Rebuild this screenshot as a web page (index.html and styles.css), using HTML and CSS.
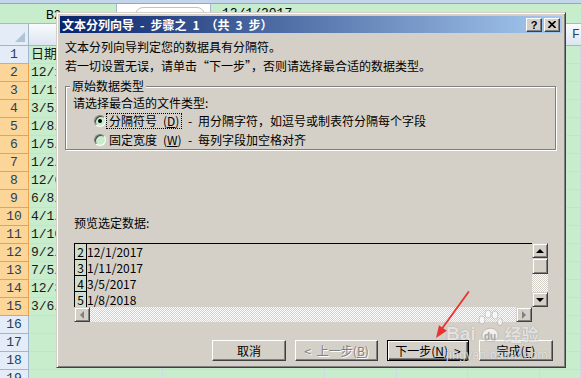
FILE: index.html
```html
<!DOCTYPE html>
<html>
<head>
  <meta charset="utf-8">
  <title>文本分列向导</title>
  <link rel="stylesheet" href="styles.css">
</head>
<body>
<div class="excel">
  <div class="topstrip"></div>
  <div class="formula">
    <div class="namebox">B2</div>
    <div class="fxbox"><span class="fx-oval"></span></div>
    <div class="fcontent">12/1/2017</div>
  </div>
  <div class="sheet">
    <div class="ch corner"><span class="corner-tri"></span></div><div class="ch">A</div><div class="ch">B</div><div class="ch">C</div><div class="ch">D</div><div class="ch">E</div><div class="ch last">F</div>
    <div class="rh">1</div><div class="c">日期</div><div class="c"></div><div class="c"></div><div class="c"></div><div class="c"></div><div class="c"></div>
    <div class="rh sel">2</div><div class="c">12/1/2017</div><div class="c"></div><div class="c"></div><div class="c"></div><div class="c"></div><div class="c"></div>
    <div class="rh sel">3</div><div class="c">1/11/2017</div><div class="c"></div><div class="c"></div><div class="c"></div><div class="c"></div><div class="c"></div>
    <div class="rh sel">4</div><div class="c">3/5/2017</div><div class="c"></div><div class="c"></div><div class="c"></div><div class="c"></div><div class="c"></div>
    <div class="rh sel">5</div><div class="c">1/8/2018</div><div class="c"></div><div class="c"></div><div class="c"></div><div class="c"></div><div class="c"></div>
    <div class="rh sel">6</div><div class="c">1/5/2018</div><div class="c"></div><div class="c"></div><div class="c"></div><div class="c"></div><div class="c"></div>
    <div class="rh sel">7</div><div class="c">1/2/2018</div><div class="c"></div><div class="c"></div><div class="c"></div><div class="c"></div><div class="c"></div>
    <div class="rh sel">8</div><div class="c">12/6/2017</div><div class="c"></div><div class="c"></div><div class="c"></div><div class="c"></div><div class="c"></div>
    <div class="rh sel">9</div><div class="c">6/8/2017</div><div class="c"></div><div class="c"></div><div class="c"></div><div class="c"></div><div class="c"></div>
    <div class="rh sel">10</div><div class="c">4/1/2017</div><div class="c"></div><div class="c"></div><div class="c"></div><div class="c"></div><div class="c"></div>
    <div class="rh sel">11</div><div class="c">1/10/2017</div><div class="c"></div><div class="c"></div><div class="c"></div><div class="c"></div><div class="c"></div>
    <div class="rh sel">12</div><div class="c">9/2/2017</div><div class="c"></div><div class="c"></div><div class="c"></div><div class="c"></div><div class="c"></div>
    <div class="rh sel">13</div><div class="c">7/5/2017</div><div class="c"></div><div class="c"></div><div class="c"></div><div class="c"></div><div class="c"></div>
    <div class="rh sel">14</div><div class="c">12/3/2017</div><div class="c"></div><div class="c"></div><div class="c"></div><div class="c"></div><div class="c"></div>
    <div class="rh sel">15</div><div class="c">3/6/2017</div><div class="c"></div><div class="c"></div><div class="c"></div><div class="c"></div><div class="c"></div>
    <div class="rh">16</div><div class="c"></div><div class="c"></div><div class="c"></div><div class="c"></div><div class="c"></div><div class="c"></div>
    <div class="rh">17</div><div class="c"></div><div class="c"></div><div class="c"></div><div class="c"></div><div class="c"></div><div class="c"></div>
    <div class="rh">18</div><div class="c"></div><div class="c"></div><div class="c"></div><div class="c"></div><div class="c"></div><div class="c"></div>
    <div class="rh">19</div><div class="c"></div><div class="c"></div><div class="c"></div><div class="c"></div><div class="c"></div><div class="c"></div>
  </div>
</div>

<!-- wizard window floats over the sheet -->
<div class="dialog">
  <div class="titlebar">
    <span class="title">文本分列向导&ensp;-&ensp;步骤之&ensp;1&ensp;（共&ensp;3&ensp;步）</span>
    <span class="tbtn help">?</span>
    <span class="tbtn close">
      <svg width="8" height="7" viewBox="0 0 8 7"><path d="M0.5 0 L7.5 7 M7.5 0 L0.5 7" stroke="#000" stroke-width="1.6"/></svg>
    </span>
  </div>
  <div class="dbody">
    <p class="intro">文本分列向导判定您的数据具有分隔符。</p>
    <p class="intro">若一切设置无误，请单击“下一步”，否则请选择最合适的数据类型。</p>
    <fieldset class="group">
      <legend>原始数据类型</legend>
      <div class="hint">请选择最合适的文件类型:</div>
      <div class="opt">
        <span class="radio on"></span>
        <span class="opt-label"><span class="focus">分隔符号&ensp;(<u>D</u>)</span></span>
        <span class="dash">-</span>用分隔字符，如逗号或制表符分隔每个字段
      </div>
      <div class="opt">
        <span class="radio"></span>
        <span class="opt-label"><span class="plain">固定宽度&ensp;(<u>W</u>)</span></span>
        <span class="dash">-</span>每列字段加空格对齐
      </div>
    </fieldset>
    <div class="pv-label">预览选定数据:</div>
    <div class="preview">
      <div class="pv-data">
        <div class="pv-row"><span class="pv-num">2</span><span class="pv-text">12/1/2017</span></div>
        <div class="pv-row"><span class="pv-num">3</span><span class="pv-text">1/11/2017</span></div>
        <div class="pv-row"><span class="pv-num">4</span><span class="pv-text">3/5/2017</span></div>
        <div class="pv-row"><span class="pv-num">5</span><span class="pv-text">1/8/2018</span></div>
      </div>
      <div class="vscroll">
        <div class="sb-btn"><span class="arr up"></span></div>
        <div class="sb-btn thumb"></div>
        <div class="sb-track"></div>
        <div class="sb-btn"><span class="arr down"></span></div>
      </div>
      <div class="hscroll">
        <div class="sb-btn"><span class="arr left"></span></div>
        <div class="sb-track"></div>
        <div class="sb-btn"><span class="arr right"></span></div>
      </div>
      <div class="sb-corner"></div>
    </div>
    <div class="buttons">
      <button class="btn cancel">取消</button>
      <button class="btn back" disabled>&lt;&ensp;上一步(<u>B</u>)</button>
      <button class="btn next">下一步(<u>N</u>)&ensp;&gt;</button>
      <button class="btn finish">完成(<u>F</u>)</button>
    </div>
  </div>
</div>

<!-- annotation arrow -->
<svg class="annot" width="581" height="378" viewBox="0 0 581 378">
  <path d="M468.5 292 L441 330" stroke="#e8332e" stroke-width="1.8" stroke-linecap="round"/>
  <path d="M436 338 L446.8 330.8 L439 325.2 Z" fill="#e8332e"/>
</svg>

<!-- watermark -->
<div class="wm">
  <div class="wm-top">
    <span class="wm-bai">Bai</span>
    <svg class="wm-paw" width="26" height="34" viewBox="0 0 26 34">
      <ellipse cx="5" cy="10" rx="3" ry="4" />
      <ellipse cx="11" cy="4" rx="3" ry="4" />
      <ellipse cx="18" cy="5" rx="3" ry="4" />
      <ellipse cx="23" cy="12" rx="2.5" ry="3.5" />
      <path d="M5 26 C5 17 20 15 21 25 C22 33 6 34 5 26 Z" />
      <text x="7" y="30" font-size="10" font-weight="bold" font-family="Liberation Sans, sans-serif">du</text>
    </svg>
    <span class="wm-jy">经验</span>
  </div>
  <div class="wm-url">jingyan.baidu.com</div>
</div>
</body>
</html>
```

FILE: styles.css
```css
* {
  box-sizing: border-box;
}
body {
  margin: 0;
  width: 581px;
  height: 378px;
  overflow: hidden;
  position: relative;
  background: #c7edcc;
  font-family: "Noto Sans CJK SC", sans-serif;
  font-size: 12px;
}

/* spreadsheet behind */
.topstrip {
  height: 4px;
  background: #c4d6ec;
  border-bottom: 1px solid #8fa8c8;
}
.formula {
  display: flex;
  height: 20px;
  border-bottom: 1px solid #a5b8d0;
}
.namebox {
  width: 117px;
  padding: 2px 0 0 46px;
  font: 12px/18px "Liberation Sans", sans-serif;
  border-right: 1px solid #a5b8d0;
}
.fxbox {
  width: 94px;
  background: #fff;
  border-right: 1px solid #a5b8d0;
  padding: 3px 0 0 18px;
}
.fx-oval {
  display: block;
  width: 70px;
  height: 16px;
  border: 1px solid #b7c4d4;
  border-radius: 8px;
}
.fcontent {
  padding-left: 11px;
  font: 13px/20px "Liberation Mono", monospace;
}
.sheet {
  display: grid;
  grid-template-columns: 29px 134px 162px 72px 71px 72px 41px;
  grid-template-rows: 22px;
  grid-auto-rows: 18px;
}
.ch {
  background: linear-gradient(#f9fbfd, #dce5f0);
  border-right: 1px solid #9eb6ce;
  border-bottom: 1px solid #9eb6ce;
  text-align: center;
  font: 13px/21px "Liberation Mono", monospace;
  color: #27415f;
}
.ch.last {
  text-align: left;
  padding-left: 32px;
  border-right: 0;
}
.corner {
  display: flex;
  align-items: flex-end;
  justify-content: flex-end;
  padding: 0 3px 3px 0;
  background: #e4ecf7;
}
.corner-tri {
  width: 0;
  height: 0;
  border-left: 10px solid transparent;
  border-bottom: 10px solid #b3c3d6;
}
.rh {
  background: #e4ecf7;
  border-right: 1px solid #9eb6ce;
  border-bottom: 1px solid #9eb6ce;
  text-align: center;
  font: 13px/18px "Liberation Mono", monospace;
  color: #27415f;
}
.rh.sel {
  background: #fcd598;
  border-color: #f0a048;
}
.c {
  border-right: 1px solid #d0d7e5;
  border-bottom: 1px solid #d0d7e5;
  padding-left: 2px;
  font: 13px/17px "Liberation Mono", "Noto Sans CJK SC", monospace;
  color: #1a1a1a;
  white-space: nowrap;
  overflow: hidden;
}

/* wizard dialog */
.dialog {
  position: absolute;
  left: 56px;
  top: 12px;
  width: 510px;
  height: 356px;
  background: #d4d0c8;
  border: 1px solid;
  border-color: #d4d0c8 #404040 #404040 #d4d0c8;
  box-shadow: inset 1px 1px #fff, inset -1px -1px #808080;
  padding: 3px;
}
.titlebar {
  height: 17px;
  display: flex;
  align-items: center;
  padding: 0 2px;
  background: linear-gradient(to right, #0a246a, #a6caf0);
  color: #fff;
  font-weight: bold;
}
.title {
  flex: 1;
  line-height: 17px;
}
.tbtn {
  width: 16px;
  height: 14px;
  margin-left: 2px;
  background: #d4d0c8;
  border: 1px solid;
  border-color: #fff #404040 #404040 #fff;
  box-shadow: inset -1px -1px #808080;
  display: flex;
  align-items: center;
  justify-content: center;
  color: #000;
  font: bold 11px/12px "Liberation Sans", sans-serif;
}
.dbody {
  padding: 4px 0 0 5px;
}
.intro {
  margin: 0;
  line-height: 19px;
}
.group {
  margin: 3px 0 0 0;
  width: 491px;
  padding: 0 0 0 7px;
  border: 1px solid #808080;
  box-shadow: 1px 1px 0 #fff, inset 1px 1px 0 #fff;
  min-inline-size: 0;
}
.group legend {
  padding: 0 2px;
  margin-left: -3px;
  line-height: 16px;
  background: #d4d0c8;
}
.hint {
  line-height: 17px;
}
.opt {
  display: flex;
  align-items: center;
  height: 19px;
  padding-left: 21px;
  white-space: nowrap;
}
.radio {
  width: 12px;
  height: 12px;
  border-radius: 50%;
  background: #c7edcc;
  border: 1px solid;
  border-color: #808080 #fff #fff #808080;
  box-shadow: inset 1px 1px #404040;
  display: flex;
  align-items: center;
  justify-content: center;
}
.radio.on::after {
  content: "";
  width: 4px;
  height: 4px;
  border-radius: 50%;
  background: #000;
}
.opt-label {
  width: 82px;
  padding-left: 1px;
}
.focus, .plain {
  display: inline-block;
  line-height: 12px;
  padding: 1px 2px;
}
.focus {
  outline: 1px dotted #000;
}
.dash {
  display: inline-block;
  width: 10px;
}
.pv-label {
  margin: 65px 0 0 9px;
  line-height: 16px;
}
.preview {
  margin: 12px 0 0 9px;
  width: 474px;
  display: grid;
  grid-template-columns: 458px 16px;
  grid-template-rows: 64px 15px;
}
.pv-data {
  border-top: 1px solid #000;
  overflow: hidden;
}
.pv-row {
  display: flex;
  height: 16px;
  line-height: 15px;
}
.pv-num {
  flex: none;
  width: 13px;
  border: 1px solid #000;
  border-top: 0;
  background: #d0ddcc;
  text-align: center;
}
.vscroll {
  display: flex;
  flex-direction: column;
}
.hscroll {
  display: flex;
}
.sb-btn {
  flex: none;
  width: 16px;
  height: 15px;
  background: #d4d0c8;
  border: 1px solid;
  border-color: #d4d0c8 #404040 #404040 #d4d0c8;
  box-shadow: inset 1px 1px #fff, inset -1px -1px #808080;
  display: flex;
  align-items: center;
  justify-content: center;
}
.sb-btn.thumb {
  height: 16px;
}
.sb-track {
  flex: 1;
  background: repeating-conic-gradient(#fff 0 25%, #d4d0c8 0 50%) 0 0 / 2px 2px;
}
.arr {
  width: 0;
  height: 0;
}
.arr.up {
  border-left: 4px solid transparent;
  border-right: 4px solid transparent;
  border-bottom: 4px solid #000;
}
.arr.down {
  border-left: 4px solid transparent;
  border-right: 4px solid transparent;
  border-top: 4px solid #000;
}
.arr.left {
  border-top: 4px solid transparent;
  border-bottom: 4px solid transparent;
  border-right: 4px solid #808080;
}
.arr.right {
  border-top: 4px solid transparent;
  border-bottom: 4px solid transparent;
  border-left: 4px solid #808080;
}
.buttons {
  display: flex;
  margin-top: 18px;
  padding-left: 147px;
}
.btn {
  height: 21px;
  margin: 0 9px 0 0;
  padding: 0;
  background: #d4d0c8;
  border: 1px solid;
  border-color: #fff #404040 #404040 #fff;
  box-shadow: inset -1px -1px #808080;
  border-radius: 0;
  font: 12px "Noto Sans CJK SC", sans-serif;
  color: #000;
  display: flex;
  align-items: center;
  justify-content: center;
}
.cancel { width: 75px; }
.back { width: 84px; }
.next { width: 83px; margin-right: 10px; }
.finish { width: 75px; }
.btn[disabled] {
  color: #808080;
  text-shadow: 1px 1px #fff;
}
.btn.next {
  border-color: #000;
  box-shadow: inset 1px 1px #fff, inset -1px -1px #404040, inset -2px -2px #808080;
}

/* overlays */
.annot {
  position: absolute;
  left: 0;
  top: 0;
}
.wm {
  position: absolute;
  left: 446px;
  top: 308px;
  color: rgba(255, 255, 255, 0.75);
  text-shadow: 0 0 1px rgba(60, 60, 60, 0.5);
}
.wm-top {
  display: flex;
  align-items: flex-end;
  height: 36px;
}
.wm-bai {
  font: bold 19px/20px "Liberation Sans", sans-serif;
}
.wm-paw {
  fill: rgba(255, 255, 255, 0.7);
  stroke: rgba(90, 90, 90, 0.35);
  stroke-width: 0.8;
  margin: 0 2px 0 1px;
}
.wm-paw text {
  fill: rgba(150, 150, 150, 0.6);
  stroke: none;
}
.wm-jy {
  font: bold 17px/20px "Noto Sans CJK SC", sans-serif;
}
.wm-url {
  margin-top: 5px;
  font: 12px/12px "Liberation Sans", sans-serif;
  letter-spacing: 0.3px;
}
```
